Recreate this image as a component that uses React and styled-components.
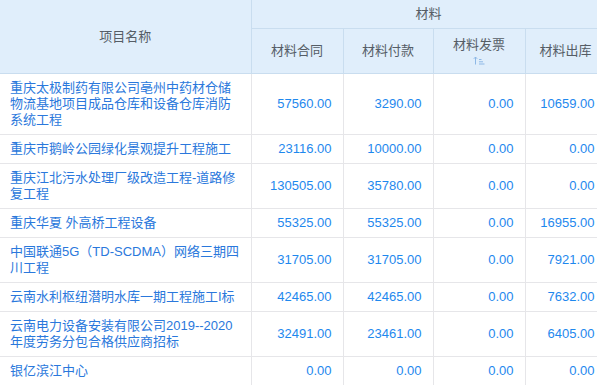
import React from 'react'
import styled, { createGlobalStyle } from 'styled-components'

const rows = [
  { name: '重庆太极制药有限公司亳州中药材仓储物流基地项目成品仓库和设备仓库消防系统工程', contract: '57560.00', pay: '3290.00', invoice: '0.00', out: '10659.00' },
  { name: '重庆市鹅岭公园绿化景观提升工程施工', contract: '23116.00', pay: '10000.00', invoice: '0.00', out: '0.00' },
  { name: '重庆江北污水处理厂级改造工程-道路修复工程', contract: '130505.00', pay: '35780.00', invoice: '0.00', out: '0.00' },
  { name: '重庆华夏 外高桥工程设备', contract: '55325.00', pay: '55325.00', invoice: '0.00', out: '16955.00' },
  { name: '中国联通5G（TD-SCDMA）网络三期四川工程', contract: '31705.00', pay: '31705.00', invoice: '0.00', out: '7921.00' },
  { name: '云南水利枢纽潜明水库一期工程施工I标', contract: '42465.00', pay: '42465.00', invoice: '0.00', out: '7632.00' },
  { name: '云南电力设备安装有限公司2019--2020年度劳务分包合格供应商招标', contract: '32491.00', pay: '23461.00', invoice: '0.00', out: '6405.00' },
  { name: '银亿滨江中心', contract: '0.00', pay: '0.00', invoice: '0.00', out: '0.00' },
]

const GlobalStyle = createGlobalStyle`
  body {
    margin: 0;
    background: #fff;
    overflow: hidden;
    font-family: "Liberation Sans", "Noto Sans CJK SC", sans-serif;
  }
`

const Wrapper = styled.div`
  width: 597px;
  overflow: hidden;
`

const Table = styled.table`
  width: 606px;
  border-collapse: collapse;
  table-layout: fixed;
  font-size: 13px;
`

const Head = styled.th`
  background: #e0eefb;
  border: 1px solid #c9ddef;
  border-top: none;
  color: #555d66;
  font-weight: normal;
  text-align: center;
  height: ${p => p.$h || 44}px;
  padding: 0;
  line-height: 16px;
  vertical-align: middle;
`

const SortIcon = styled.svg`
  display: block;
  margin: 3px auto 0;
`

const Name = styled.td`
  border: 1px solid #e6e6e9;
  color: #2a78dc;
  padding: 6px 10px;
  line-height: 16px;
  vertical-align: middle;
`

const Num = styled.td`
  border: 1px solid #e6e6e9;
  color: #1e88ee;
  padding: 6px 11px 6px 4px;
  line-height: 16px;
  text-align: right;
  vertical-align: middle;
`

function App() {
  return (
    <Wrapper>
      <GlobalStyle />
      <Table>
        <colgroup>
          <col style={{ width: 251 }} />
          <col style={{ width: 92 }} />
          <col style={{ width: 90 }} />
          <col style={{ width: 92 }} />
          <col style={{ width: 81 }} />
        </colgroup>
        <thead>
          <tr>
            <Head rowSpan={2} style={{ borderLeft: 'none' }}>项目名称</Head>
            <Head colSpan={4} $h={28}>材料</Head>
          </tr>
          <tr>
            <Head>材料合同</Head>
            <Head>材料付款</Head>
            <Head>
              材料发票
              <SortIcon width="12" height="9" viewBox="0 0 12 9" fill="none" stroke="#8db8e6" strokeWidth="1">
                <path d="M2.5 8.5V1M0.8 2.8L2.5 1L4.2 2.8" />
                <path d="M6 3.5H8.5M6 5.8H10M6 8H11.5" />
              </SortIcon>
            </Head>
            <Head>材料出库</Head>
          </tr>
        </thead>
        <tbody>
          {rows.map((r, i) => (
            <tr key={i}>
              <Name style={{ borderLeft: 'none' }}>{r.name}</Name>
              <Num>{r.contract}</Num>
              <Num>{r.pay}</Num>
              <Num>{r.invoice}</Num>
              <Num>{r.out}</Num>
            </tr>
          ))}
        </tbody>
      </Table>
    </Wrapper>
  )
}

export default App
